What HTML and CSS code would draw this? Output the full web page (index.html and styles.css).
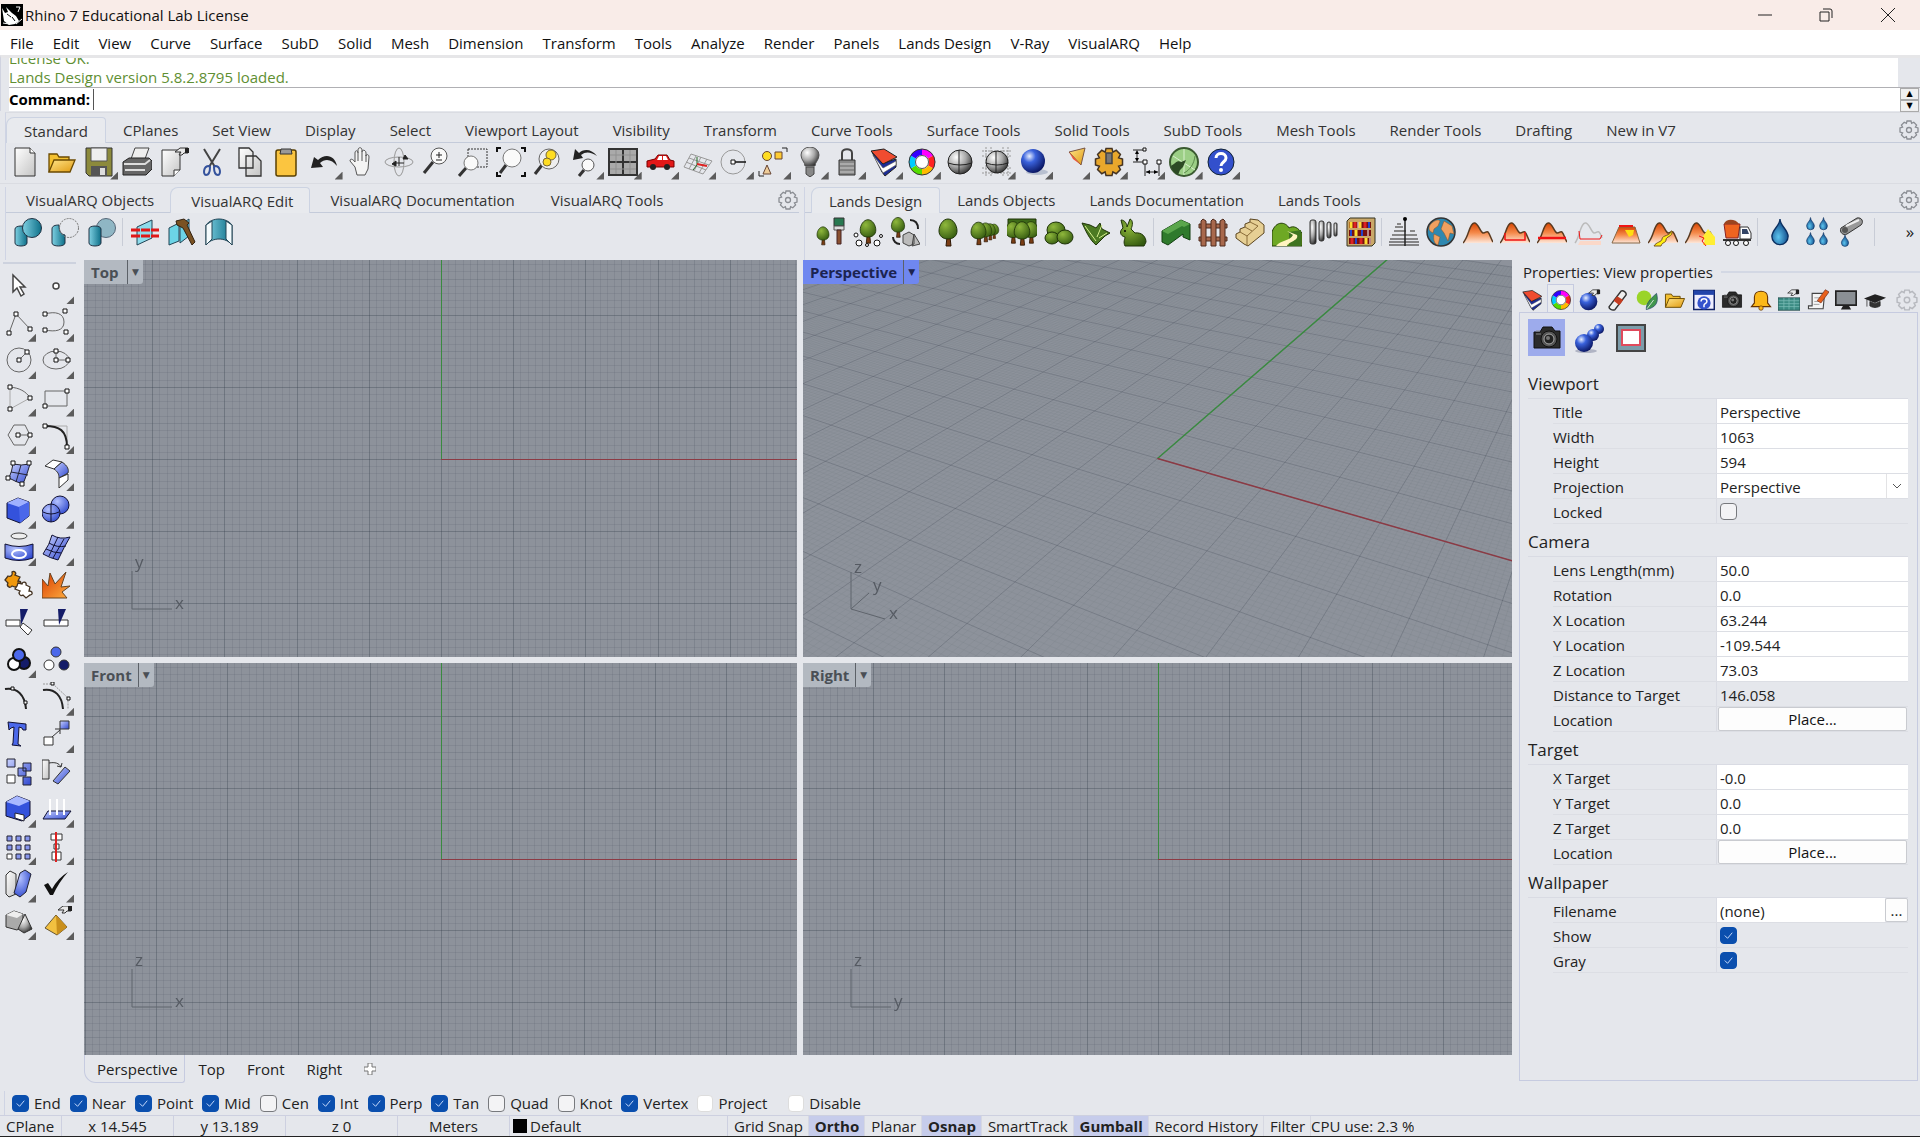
FILE: index.html
```html
<!DOCTYPE html>
<html lang="en">
<head>
<meta charset="utf-8">
<title>Rhino 7 Educational Lab License</title>
<link rel="stylesheet" href="styles.css">
</head>
<body>
<svg class="defs" aria-hidden="true">
  <defs>
    <linearGradient id="gBlue" x1="0" y1="0" x2="1" y2="1"><stop offset="0" stop-color="#c9d2ff"/><stop offset="1" stop-color="#3048d0"/></linearGradient>
    <linearGradient id="gTeal" x1="0" y1="0" x2="1" y2="0"><stop offset="0" stop-color="#7fd0e2"/><stop offset="1" stop-color="#0d6f88"/></linearGradient>
    <linearGradient id="gPaper" x1="0" y1="0" x2="1" y2="1"><stop offset="0" stop-color="#fff"/><stop offset="1" stop-color="#c4c4c4"/></linearGradient>
    <linearGradient id="gGold" x1="0" y1="0" x2="1" y2="1"><stop offset="0" stop-color="#ffe58a"/><stop offset="1" stop-color="#e09a10"/></linearGradient>
    <linearGradient id="gHill" x1="0" y1="0" x2="0" y2="1"><stop offset="0" stop-color="#d84400"/><stop offset=".5" stop-color="#f58b4c"/><stop offset="1" stop-color="#fde6d8"/></linearGradient>
    <linearGradient id="gFire" x1="0" y1="0" x2="1" y2="1"><stop offset="0" stop-color="#d83a00"/><stop offset="1" stop-color="#ffb040"/></linearGradient>
    <radialGradient id="gBall" cx=".35" cy=".3" r=".75"><stop offset="0" stop-color="#e8efff"/><stop offset=".35" stop-color="#3a62dc"/><stop offset="1" stop-color="#08125c"/></radialGradient>
    <radialGradient id="gSoft" cx=".35" cy=".3" r=".8"><stop offset="0" stop-color="#b4c2ff"/><stop offset="1" stop-color="#2b45cc"/></radialGradient>
    <radialGradient id="gGray" cx=".35" cy=".3" r=".8"><stop offset="0" stop-color="#fff"/><stop offset=".5" stop-color="#a8a8a8"/><stop offset="1" stop-color="#202020"/></radialGradient>
    <radialGradient id="gLeaf" cx=".35" cy=".3" r=".8"><stop offset="0" stop-color="#8fb83c"/><stop offset="1" stop-color="#33590f"/></radialGradient>
    <radialGradient id="gDrop" cx=".4" cy=".7" r=".7"><stop offset="0" stop-color="#5cc4ee"/><stop offset="1" stop-color="#063a7c"/></radialGradient>
  </defs>
  <symbol id="tree" viewBox="0 0 30 30"><path d="M14 20h3l1 9h-5z" fill="#7a3d14" stroke="#2c1604"/><path d="M15 2c5 0 9 6 9 12 0 5-4 8-9 8s-9-3-9-8c0-6 4-12 9-12z" fill="url(#gLeaf)" stroke="#1e3308"/></symbol>
  <symbol id="hill" viewBox="0 0 30 30"><path d="M1 26C6 20 6 7 11 6c4-1 6 9 9 10 3 0 3-2 5-1 2 2 3 7 5 11z" fill="url(#gHill)"/><path d="M0 26C6 20 6 7 11 6c4-1 6 9 9 10 3 0 3-2 5-1 2 2 3 7 5 10" fill="none" stroke="#5a3a20" stroke-width="1.500"/></symbol>
  <symbol id="gear" viewBox="0 0 20 20"><path d="M8 1h4l.6 2.400 2.200-1.200 2.800 2.800-1.200 2.200L19 8v4l-2.600.8 1.200 2.200-2.800 2.800-2.200-1.200L12 19H8l-.6-2.400-2.200 1.200L2.400 15l1.200-2.200L1 12V8l2.600-.8L2.400 5l2.800-2.800 2.200 1.200z" fill="none" stroke="currentColor" stroke-width="1.300"/><circle cx="10" cy="10" r="2.500" fill="none" stroke="currentColor" stroke-width="1.300"/></symbol>
  <symbol id="wheel" viewBox="0 0 30 30"><g fill="none" stroke-width="6"><path d="M15 5a10 10 0 0 1 8.700 5" stroke="#f0f"/><path d="M23.700 10a10 10 0 0 1 0 10" stroke="#f22"/><path d="M23.700 20a10 10 0 0 1-8.700 5" stroke="#fb0"/><path d="M15 25a10 10 0 0 1-8.700-5" stroke="#5d0"/><path d="M6.300 20a10 10 0 0 1 0-10" stroke="#0cf"/><path d="M6.300 10a10 10 0 0 1 8.700-5" stroke="#30f"/></g><circle cx="15" cy="15" r="6.500" fill="#fff" stroke="#555"/><circle cx="15" cy="15" r="13" fill="none" stroke="#333"/></symbol>
  <symbol id="wedge" viewBox="0 0 30 30"><path d="M2 5l10 20 3 4 11-9V12L14 16z" fill="#1c2c98" stroke="#222"/><path d="M3 8l10 13 13-7v4l-13 8z" fill="#fff" stroke="#555" stroke-width=".6"/><path d="M1 4l13-2 13 8-14 7z" fill="#f04c30" stroke="#222"/></symbol>
  <symbol id="folder" viewBox="0 0 30 30"><path d="M2 25V7h8l2 3h10v5" fill="#f3c030" stroke="#6b4a00" stroke-width="1.300"/><path d="M2 25l5-12h21l-5 12z" fill="url(#gGold)" stroke="#6b4a00" stroke-width="1.300"/></symbol>
  <symbol id="camera" viewBox="0 0 30 30"><path d="M2 9h6l3-5h9l3 4h5v17H2z" fill="#2b2b2b" stroke="#111"/><path d="M4 11h5M4 8h4" stroke="#888"/><circle cx="17" cy="16" r="8" fill="#555" stroke="#111"/><circle cx="17" cy="16" r="5" fill="#222" stroke="#aaa"/><circle cx="16" cy="15" r="2" fill="#777"/></symbol>
  <symbol id="hand" viewBox="0 0 14 9"><path d="M0 5l5-4h8v5H9L7 8H4l2-3z" fill="#e8e8e8" stroke="#333"/><path d="M10 1h4v5h-4z" fill="#222"/></symbol>
  <symbol id="drop" viewBox="0 0 14 20"><path d="M7 0c0 5 6 8 6 13a6 6 0 0 1-12 0C1 8 7 5 7 0z" fill="url(#gDrop)" stroke="#0a2f60"/></symbol>
</svg>

<header class="titlebar">
  <svg class="logo" viewBox="0 0 22 22"><path d="M0 0h22v22H0z"/><path d="M1 4l3 5 3-1-2-5 6 6 4 3 3 5-4 3-6 1-5-4z" fill="#fff"/><path d="M15 3h4l-2 5M2 19l6 1M15 20l6-5" stroke="#fff" fill="none"/><path d="M6 10l4 3M11 13l3 4" stroke="#000" fill="none"/></svg>
  <h1>Rhino 7 Educational Lab License</h1>
  <div class="window-buttons">
    <button aria-label="Minimize"><svg viewBox="0 0 16 16"><path d="M1 8h14" class="wl"/></svg></button>
    <button aria-label="Restore"><svg viewBox="0 0 16 16"><path d="M2 5h9v9H2zM5 2h7q2 0 2 2v7" class="wl"/></svg></button>
    <button aria-label="Close"><svg viewBox="0 0 16 16"><path d="M1 1l14 14M15 1L1 15" class="wl"/></svg></button>
  </div>
</header>

<nav class="menubar">
  <button>File</button><button>Edit</button><button>View</button><button>Curve</button><button>Surface</button><button>SubD</button><button>Solid</button><button>Mesh</button><button>Dimension</button><button>Transform</button><button>Tools</button><button>Analyze</button><button>Render</button><button>Panels</button><button>Lands Design</button><button>V-Ray</button><button>VisualARQ</button><button>Help</button>
</nav>

<section class="command">
  <div class="history"><p>License OK.</p><p>Lands Design version 5.8.2.8795 loaded.</p></div>
  <div class="prompt">
    <label for="cmd">Command:</label><input id="cmd" type="text">
    <div class="spin"><button aria-label="Up">▲</button><button aria-label="Down">▼</button></div>
  </div>
</section>

<section class="bar standard">
  <div class="tabs">
    <button class="on first">Standard</button><button>CPlanes</button><button>Set View</button><button>Display</button><button>Select</button><button>Viewport Layout</button><button>Visibility</button><button>Transform</button><button>Curve Tools</button><button>Surface Tools</button><button>Solid Tools</button><button>SubD Tools</button><button>Mesh Tools</button><button>Render Tools</button><button>Drafting</button><button>New in V7</button>
    <button class="opts" aria-label="Options"><svg><use href="#gear"/></svg></button>
  </div>
  <div class="tools wide">
    <button aria-label="New"><svg viewBox="0 0 30 30"><path d="M5 1h15l5 5v23H5z" fill="url(#gPaper)" stroke="#333"/><path d="M20 1v5h5" fill="#fff" stroke="#333"/></svg></button>
    <button aria-label="Open"><svg><use href="#folder"/></svg></button>
    <button class="f" aria-label="Save"><svg viewBox="0 0 30 30"><path d="M2 1h26v28H5l-3-3z" fill="#8c8a3c" stroke="#333"/><path d="M7 1h16v13H7z" fill="#eee" stroke="#555"/><path d="M7 19h16v10H7z" fill="#555"/><path d="M16 21h5v7h-5z" fill="#ddd"/></svg></button>
    <button aria-label="Print"><svg viewBox="0 0 30 30"><path d="M9 12l4-11h14l-4 11z" fill="#eee" stroke="#444"/><path d="M1 15l6-4h20l3 3v8l-6 6H1z" fill="#666" stroke="#222"/><path d="M2 17h21l5-4M3 23h20" stroke="#ddd" fill="none" stroke-width="2"/></svg></button>
    <button aria-label="Properties"><svg viewBox="0 0 30 30"><path d="M3 3h18v20l-6 6H3z" fill="url(#gPaper)" stroke="#333"/><path d="M21 23h-6v6" fill="#fff" stroke="#333"/><use href="#hand" x="16" y="0" width="14" height="9"/></svg></button>
    <button aria-label="Cut"><svg viewBox="0 0 30 30"><path d="M7 2l11 18M23 2L12 20" stroke="#444" stroke-width="2"/><path d="M12 19c-6 0-6 9-3 9s4-4 4-8zM18 19c6 0 6 9 3 9s-4-4-4-8z" fill="none" stroke="#34529c" stroke-width="2"/></svg></button>
    <button aria-label="Copy"><svg viewBox="0 0 30 30"><path d="M5 1h10l4 4v16H5zM12 9h10l5 5v15H12z" fill="url(#gPaper)" stroke="#333" stroke-width="1.300"/></svg></button>
    <button aria-label="Paste"><svg viewBox="0 0 30 30"><rect x="5" y="3" width="20" height="26" rx="2" fill="#fbc540" stroke="#5a4000" stroke-width="1.500"/><path d="M10 2h10l1 5H9z" fill="#999" stroke="#333"/></svg></button>
    <button class="f" aria-label="Undo"><svg viewBox="0 0 30 30"><path d="M28 19C26 8 16 6 9 13L5 10 2 21l12-1-3-4c5-5 12-4 17 3z" fill="#222"/></svg></button>
    <button aria-label="Pan"><svg viewBox="0 0 30 30"><path d="M11 28l-2-8-5-6c0-3 3-2 5 1V6c0-3 3-3 3 0V3c0-3 4-3 4 0v2c0-3 4-2 4 1v3c0-2 3-2 3 1l-1 12-3 6z" fill="#f4f4f4" stroke="#555"/><path d="M12 6v8M16 5v9M20 8v7" stroke="#555"/></svg></button>
    <button aria-label="Rotate view"><svg viewBox="0 0 30 30"><ellipse cx="15" cy="15" rx="14" ry="5" fill="none" stroke="#999"/><ellipse cx="15" cy="15" rx="5" ry="14" fill="none" stroke="#999"/><path d="M8 17l4-3v5zM19 12h5l-3-4zM15 10v9M11 16h9" fill="#222" stroke="#222"/></svg></button>
    <button aria-label="Zoom"><svg viewBox="0 0 30 30"><path d="M12 15L3 26" stroke="#333" stroke-width="3"/><circle cx="18" cy="9" r="8" fill="#fafafa" stroke="#555"/><path d="M15 8h6M18 5v6M15 13h6" stroke="#222"/></svg></button>
    <button aria-label="Zoom window"><svg viewBox="0 0 30 30"><path d="M10 2h19v18H10z" fill="none" stroke="#333" stroke-dasharray="2 1"/><path d="M8 21l-7 8" stroke="#333" stroke-width="3"/><circle cx="13" cy="16" r="7" fill="#fafafa" stroke="#777"/></svg></button>
    <button aria-label="Zoom extents"><svg viewBox="0 0 30 30"><path d="M1 5V1h4M25 1h4v4M29 25v4h-4M5 29H1v-4" fill="none" stroke="#111" stroke-width="2"/><path d="M10 18l-6 8" stroke="#333" stroke-width="3"/><circle cx="16" cy="11" r="9" fill="#fafafa" stroke="#777"/></svg></button>
    <button aria-label="Zoom selected"><svg viewBox="0 0 30 30"><path d="M9 18l-7 9" stroke="#333" stroke-width="3"/><circle cx="16" cy="12" r="10" fill="#eee" stroke="#666"/><circle cx="18" cy="8" r="5" fill="#fd2" stroke="#763"/><circle cx="14" cy="15" r="4" fill="#fd2" stroke="#763"/></svg></button>
    <button class="f" aria-label="Undo view"><svg viewBox="0 0 30 30"><path d="M26 9C20 1 12 2 8 6L4 2 2 13l10-2-2-3c5-4 10-3 16 1z" fill="#222"/><path d="M13 23l-5 6" stroke="#333" stroke-width="3"/><circle cx="17" cy="18" r="6" fill="#fafafa" stroke="#555"/></svg></button>
    <button class="f" aria-label="Four viewports"><svg viewBox="0 0 30 30"><path d="M1 2h28v26H1z" fill="#aaa" stroke="#333" stroke-width="2"/><path d="M15 2v26M1 15h28" stroke="#333" stroke-width="2"/><path d="M8 3v24M22 3v24M2 8h26M2 22h26" stroke="#909090"/></svg></button>
    <button class="f" aria-label="Right view"><svg viewBox="0 0 30 30"><path d="M2 20v-6l8-2 3-4h9l3 5 4 1v6z" fill="#e21818" stroke="#700"/><path d="M14 9h3v4h-5zM18 9h3l2 4h-5z" fill="#fff"/><circle cx="8" cy="20" r="3" fill="#222"/><circle cx="22" cy="20" r="3" fill="#222"/></svg></button>
    <button class="f" aria-label="CPlane"><svg viewBox="0 0 30 30"><path d="M8 7l21 7-9 13L1 20zM13 9L6 22M18 10l-7 14M24 12l-8 14M6 11l20 7M3 15l20 8" fill="none" stroke="#999"/><path d="M14 10v8l-4 5" fill="none" stroke="#262"/><path d="M14 17l10 2" stroke="#d22" stroke-width="2"/></svg></button>
    <button class="f" aria-label="Osnap"><svg viewBox="0 0 30 30"><circle cx="13" cy="15" r="12" fill="none" stroke="#999"/><path d="M13 15h13" stroke="#111" stroke-width="1.500"/><path class="h" d="M11 13h4v4h-4z"/></svg></button>
    <button class="f" aria-label="Select"><svg viewBox="0 0 30 30"><circle cx="9" cy="9" r="4.500" fill="#fd2" stroke="#643"/><path d="M17 5h7v7h-7z" fill="#fc3" stroke="#643"/><path d="M9 18l4 9H5z" fill="#ec9" stroke="#643"/><path d="M24 1h5v4M1 24v5h5" fill="none" stroke="#222"/></svg></button>
    <button class="f" aria-label="Hide"><svg viewBox="0 0 30 30"><path d="M10 19c0-4-4-6-4-11a9 8 0 0 1 18 0c0 5-4 7-4 11z" fill="url(#gGray)" stroke="#555"/><path d="M11 20h8v7l-4 3-4-3z" fill="#888" stroke="#444"/></svg></button>
    <button class="f" aria-label="Lock"><svg viewBox="0 0 30 30"><path d="M10 13V6c0-5 10-5 10 0v7" fill="none" stroke="#444" stroke-width="2"/><path d="M7 13h16v15H7z" fill="#888" stroke="#333"/><path d="M8 17h14M8 21h14M8 25h14" stroke="#ccc"/></svg></button>
    <button class="f" aria-label="Layers"><svg><use href="#wedge"/></svg></button>
    <button class="f" aria-label="Color"><svg><use href="#wheel"/></svg></button>
    <button aria-label="Shade"><svg viewBox="0 0 30 30"><circle cx="15" cy="15" r="12" fill="url(#gGray)" stroke="#222"/><path d="M3 16q12 4 24 0M14 3v24" fill="none" stroke="#222"/></svg></button>
    <button class="f" aria-label="Shade selected"><svg viewBox="0 0 30 30"><path d="M4 0v30M9 0v30M21 0v30M26 0v30M0 4h30M0 9h30M0 21h30M0 26h30" stroke="#999" stroke-dasharray="2 1"/><circle cx="15" cy="15" r="11" fill="url(#gGray)" stroke="#222"/><path d="M4 16q11 4 22 0M14 4v22" fill="none" stroke="#222"/></svg></button>
    <button class="f" aria-label="Render"><svg viewBox="0 0 30 30"><ellipse cx="18" cy="25" rx="11" ry="3" fill="#b8c0d0"/><circle cx="14" cy="14" r="12" fill="url(#gBall)"/></svg></button>
    <button class="f" aria-label="Spotlight"><svg viewBox="0 0 30 30"><path d="M12 5L28 1l-4 17z" fill="url(#gGold)" stroke="#754"/><path d="M12 5l12 13-8-6z" fill="#e53"/></svg></button>
    <button class="f" aria-label="Options"><svg viewBox="0 0 20 20"><path d="M8 1h4l.6 2.400 2.200-1.200 2.800 2.800-1.200 2.200L19 8v4l-2.600.8 1.200 2.200-2.800 2.800-2.200-1.200L12 19H8l-.6-2.400-2.200 1.200L2.400 15l1.200-2.200L1 12V8l2.600-.8L2.400 5l2.800-2.800 2.200 1.200z" fill="#e9a82c" stroke="#432"/><path d="M8 4h4v7H8z" fill="#777" stroke="#444"/></svg></button>
    <button class="f" aria-label="Dimension"><svg viewBox="0 0 30 30"><path d="M1 3h10M1 15h10M5 5v8M13 15v14M27 15v14M14 25h12" stroke="#222" fill="none"/><path d="M5 3l-2 4h4zM5 15l-2-4h4zM14 25l4-2v4zM26 25l-4-2v4z"/><path class="h" d="M11 1h3v3h-3zM11 13h4v4h-4zM25 13h4v4h-4z"/></svg></button>
    <button class="f" aria-label="Grasshopper"><svg viewBox="0 0 30 30"><circle cx="15" cy="15" r="14" fill="#9ccf86" stroke="#3a5a30" stroke-width="2"/><path d="M15 2v26M4 9l22 14" stroke="#d8f0cc"/><path d="M2 19c5-3 6-6 10-4l5-2-3 7-3 3-2 5c-4-2-6-5-7-9z" fill="#2c4a24"/><path d="M26 9c-1 8-5 14-11 17" fill="none" stroke="#5b8a4c"/></svg></button>
    <button class="f" aria-label="Help"><svg viewBox="0 0 30 30"><circle cx="15" cy="15" r="13" fill="#3350cc" stroke="#123"/><path d="M10 11c0-6 10-6 10 0 0 4-5 4-5 8" fill="none" stroke="#fff" stroke-width="3"/><circle cx="15" cy="23" r="2" fill="#fff"/></svg></button>
  </div>
</section>

<div class="bars">
  <section class="bar varq">
    <div class="tabs">
      <button>VisualARQ Objects</button><button class="on">VisualARQ Edit</button><button>VisualARQ Documentation</button><button>VisualARQ Tools</button>
      <button class="opts" aria-label="Options"><svg><use href="#gear"/></svg></button>
    </div>
    <div class="tools">
      <button aria-label="Union"><svg viewBox="0 0 30 30"><path d="M2 12c0-4 12-4 12 0v14c0 4-12 4-12 0z" fill="url(#gTeal)" stroke="#234"/><circle cx="19" cy="11" r="9.500" fill="url(#gTeal)" stroke="#234"/></svg></button>
      <button aria-label="Subtract"><svg viewBox="0 0 30 30"><path d="M2 12c0-3 3-4 7-4 0 7 2 9 6 10v8c0 4-13 4-13 0z" fill="url(#gTeal)" stroke="#234"/><circle cx="19" cy="11" r="9.500" fill="none" stroke="#777" stroke-dasharray="2 1"/></svg></button>
      <button aria-label="Intersect"><svg viewBox="0 0 30 30"><circle cx="19" cy="11" r="9.500" fill="#8fb6c4" stroke="#567"/><path d="M2 12c0-4 12-4 12 0v14c0 4-12 4-12 0z" fill="url(#gTeal)" stroke="#234"/></svg></button>
      <i class="sep"></i>
      <button aria-label="Split"><svg viewBox="0 0 30 30"><path d="M7 10l15-7v18L7 28z" fill="#8edcec" stroke="#245"/><path d="M1 13h28M1 19h28" stroke="#e01818" stroke-width="3" stroke-dasharray="9 1"/></svg></button>
      <button aria-label="Rebuild"><svg viewBox="0 0 30 30"><path d="M2 11l10-5v18L2 28zM13 8l9-6v17l-9 7z" fill="#6cd4e6" stroke="#245"/><path d="M9 4l8-2 5 4-2 2 8 17-3 3-9-17-6-3z" fill="#7a5222" stroke="#321"/></svg></button>
      <button aria-label="Wall"><svg viewBox="0 0 30 30"><path d="M2 8C8 0 22 0 28 8v20C22 20 8 20 2 28z" fill="url(#gTeal)" stroke="#245"/><path d="M2 8l6-4v18l-6 6zM28 8l-6-4v18l6 6z" fill="#f4fbfd" stroke="#245"/></svg></button>
    </div>
  </section>
  <section class="bar lands">
    <div class="tabs">
      <button class="on first">Lands Design</button><button>Lands Objects</button><button>Lands Documentation</button><button>Lands Tools</button>
      <button class="opts" aria-label="Options"><svg><use href="#gear"/></svg></button>
    </div>
    <div class="tools">
      <button aria-label="Plant style"><svg viewBox="0 0 30 30"><use href="#tree" x="-3" y="8" width="20" height="21"/><path d="M18 1h10v8H18z" fill="#287850" stroke="#333"/><path d="M18 9h10v4H18z" fill="#ddd" stroke="#555"/><path d="M21 13h4v14h-4z" fill="#8a5030" stroke="#422"/></svg></button>
      <button aria-label="Plants"><svg viewBox="0 0 30 30"><use href="#tree" x="2" width="26" height="28"/><g class="h"><circle cx="3" cy="18" r="2"/><circle cx="6" cy="26" r="3"/><circle cx="14" cy="28" r="1.500"/><circle cx="24" cy="26" r="3"/><circle cx="28" cy="19" r="1.500"/></g></svg></button>
      <button aria-label="Replace"><svg viewBox="0 0 30 30"><use href="#tree" x="-3" y="-1" width="22" height="22"/><path d="M20 3c6 0 8 4 8 9M3 20c0 4 3 7 7 7" fill="none" stroke="#222" stroke-width="2"/><path d="M13 18l6-3 5 3v9l-5 2-6-3zM24 17l6 10-8 2z" fill="#bbb" stroke="#444"/></svg></button>
      <i class="sep"></i>
      <button aria-label="Plant"><svg><use href="#tree"/></svg></button>
      <button aria-label="Row"><svg viewBox="0 0 30 30"><use href="#tree" x="16" y="5" width="16" height="18"/><use href="#tree" x="11" y="4" width="18" height="21"/><use href="#tree" x="5" y="3" width="21" height="24"/><use href="#tree" x="-4" y="3" width="25" height="26"/></svg></button>
      <button aria-label="Forest"><svg viewBox="0 0 30 30"><path d="M1 2h28v15H1z" fill="#3d6a18" stroke="#1e3308"/><use href="#tree" x="-6" y="1" width="24" height="28"/><use href="#tree" x="12" y="1" width="24" height="28"/><use href="#tree" x="2" y="2" width="26" height="28"/></svg></button>
      <button aria-label="Shrub"><svg viewBox="0 0 30 30"><g fill="url(#gLeaf)" stroke="#1e3308"><ellipse cx="12" cy="13" rx="9" ry="8"/><ellipse cx="8" cy="21" rx="7" ry="6"/><ellipse cx="21" cy="20" rx="8" ry="7"/></g></svg></button>
      <button aria-label="Ground cover"><svg viewBox="0 0 30 30"><path d="M1 6l8 2 6 3 4-5 2 6 8 4-5 3-9 9C8 22 5 14 1 6z" fill="#4c7a22" stroke="#1e3308"/><path d="M4 9l11 15M21 8l-5 12M26 16l-8 5" stroke="#d8f090" fill="none"/></svg></button>
      <button aria-label="Rabbit"><svg viewBox="0 0 30 30"><path d="M3 3c4 0 6 4 6 7l3-8c3 1 3 6 1 10l4 4c7-1 11 4 11 9l-2 4H7c-2-4 0-7 0-9-5-1-6-6-2-9z" fill="url(#gLeaf)" stroke="#1e3308"/><circle cx="7" cy="14" r="1"/></svg></button>
      <i class="sep"></i>
      <button aria-label="Hedge"><svg viewBox="0 0 30 30"><path d="M1 14L20 3l9 4v16l-7-3v-3L7 28l-6-3z" fill="#2f7a2c" stroke="#123f10"/><path d="M1 14L20 3l9 4-6 3-2-1L7 17z" fill="#5aa64c"/></svg></button>
      <button aria-label="Fence"><svg viewBox="0 0 30 30"><g fill="#a8684c" stroke="#4e2a1c"><path d="M1 7h28v4H1zM1 20h28v4H1z"/><path d="M3 4l2-2 3 2v25H3zM13 4l2-2 3 2v25h-5zM22 4l3-2 2 2v25h-5z"/></g></svg></button>
      <button aria-label="Stairs"><svg viewBox="0 0 30 30"><path d="M1 17l4-2v-3l5-2V7l5-2V2l8 1 6 5v8L13 29l-4-2-8-6z" fill="#e6cf94" stroke="#5b4520"/><path d="M5 15l7 4 11-10M10 10l7 4M15 5l8 4M12 19v9" fill="none" stroke="#8a6c38"/></svg></button>
      <button aria-label="Path"><svg viewBox="0 0 30 30"><path d="M0 15c4-12 14-10 17-4 5-3 9 0 13 5v13H0z" fill="#6ea824" stroke="#243f08"/><path d="M17 15l12-2v16H17z" fill="#3f7420"/><path d="M4 29c5-6 14-5 17-11l-6-4 10 4c2 6-8 6-10 11z" fill="#fff4c0"/></svg></button>
      <button aria-label="Bollards"><svg viewBox="0 0 30 30"><g fill="url(#gGray)" stroke="#333"><rect x="1" y="3" width="6" height="24" rx="2"/><rect x="10" y="4" width="5" height="20" rx="2"/><rect x="18" y="5" width="4" height="16" rx="2"/><rect x="25" y="6" width="3" height="13" rx="1"/></g></svg></button>
      <button aria-label="Library"><svg viewBox="0 0 30 30"><path d="M1 4l3-3h25v25l-3 3H1z" fill="#caa868" stroke="#332"/><path d="M3 5h22v6H3zM3 13h22v6H3zM3 21h22v6H3z" fill="#711"/><path d="M5 5v6M14 5v6M10 13v6M20 21v6" stroke="#fd3" stroke-width="3"/><path d="M9 5v6M19 5v6M6 21v6M15 21v6" stroke="#d22" stroke-width="3"/><path d="M23 5v6M5 13v6M16 13v6M10 21v6" stroke="#24c" stroke-width="2"/><path d="M22 13v6M12 5v6M24 21v6" stroke="#fff"/></svg></button>
      <i class="sep"></i>
      <button aria-label="Section"><svg viewBox="0 0 30 30"><path d="M8 7h4M6 10h8M5 14h12M21 14h5M3 18h25" stroke="#888" stroke-width="2"/><path d="M1 22h28M0 25h30M0 28h30" stroke="#666" stroke-width="1.500"/><path d="M16 1v28" stroke="#222" stroke-width="1.500"/><circle cx="16" cy="2" r="2"/></svg></button>
      <button aria-label="Earth"><svg viewBox="0 0 30 30"><circle cx="15" cy="15" r="14" fill="#2e88b0" stroke="#333" stroke-width="1.500"/><path d="M4 8c4-5 9-6 10-4l-2 5-4 3-1 4c-4-2-5-4-3-8zM8 17l6 3-2 8c-4-1-5-6-4-11zM18 4l8 5 2 8-4-1-2 8-4-8-3-4z" fill="#f0a060" stroke="#8a5020" stroke-width=".5"/></svg></button>
      <button aria-label="Terrain"><svg><use href="#hill"/></svg></button>
      <button aria-label="Terrain volume"><svg viewBox="0 0 30 30"><use href="#hill"/><path d="M5 23h20V15M5 23v-7" fill="none" stroke="#f01414" stroke-width="1.500"/></svg></button>
      <button aria-label="Terrain level"><svg viewBox="0 0 30 30"><use href="#hill"/><path d="M1 21h28" stroke="#f01414" stroke-width="2.500"/></svg></button>
      <button aria-label="Terrain hole"><svg viewBox="0 0 30 30"><path d="M1 26C6 20 6 7 11 6c4-1 6 9 9 10 3 0 3-2 5-1 2 2 2 4 3 6" fill="none" stroke="#bbb" stroke-width="1.500"/><path d="M5 14l1 8h20l2-4" fill="none" stroke="#f01414"/><path d="M6 24h21v4H4z" fill="#fbd8c8"/></svg></button>
      <button aria-label="Terrain cut"><svg viewBox="0 0 30 30"><path d="M1 26L8 10h16l5 16z" fill="url(#gHill)" stroke="#864"/><path d="M8 9h14" stroke="#f01414" stroke-width="2"/><path d="M14 13h9l-1 5-4 2z" fill="#fd1"/></svg></button>
      <button aria-label="Terrain path"><svg viewBox="0 0 30 30"><use href="#hill"/><path d="M23 14c0 5-9 4-9 8 0 3-6 3-8 7h7c1-4 5-3 5-6 0-4 7-3 6-9z" fill="#fe1" stroke="#752"/></svg></button>
      <button aria-label="Terrain split"><svg viewBox="0 0 30 30"><use href="#hill"/><path d="M23 12l7 8v8H18l2-5-3-2z" fill="#fe3"/><path d="M14 19l5 2-2 3 4 5" fill="none" stroke="#f01414"/></svg></button>
      <button aria-label="Earthwork"><svg viewBox="0 0 30 30"><path d="M2 7h16l-2 14H4z" fill="#ee6420" stroke="#822"/><path d="M2 7c2-6 12-5 15 0z" fill="#9a4420"/><path d="M18 22V10h8l3 6v6z" fill="#fff" stroke="#333"/><path d="M20 12h5l2 5h-7z" fill="#346"/><path d="M1 23h28" stroke="#333" stroke-width="2"/><g class="h"><circle cx="6" cy="26" r="2.500"/><circle cx="14" cy="26" r="2.500"/><circle cx="24" cy="26" r="2.500"/></g></svg></button>
      <i class="sep"></i>
      <button aria-label="Water"><svg viewBox="0 0 30 30"><use href="#drop" x="5" y="2" width="20" height="27"/></svg></button>
      <button aria-label="Sprinklers"><svg viewBox="0 0 30 30"><use href="#drop" x="4" width="9" height="14"/><use href="#drop" x="17" width="9" height="14"/><use href="#drop" x="4" y="15" width="9" height="14"/><use href="#drop" x="17" y="15" width="9" height="14"/></svg></button>
      <button aria-label="Pipe"><svg viewBox="0 0 30 30"><path d="M2 11L18 1c5-1 7 4 4 7L8 17c-4 2-8-2-6-6z" fill="#999" stroke="#333"/><path d="M7 9L20 3" stroke="#eee" stroke-width="2"/><circle cx="6" cy="13" r="3" fill="#555"/><use href="#drop" x="1" y="18" width="10" height="12"/></svg></button>
      <i class="sep"></i>
      <button class="more" aria-label="More">»</button>
    </div>
  </section>
</div>

<main class="work">
  <aside class="palette">
    <button aria-label="Pointer"><svg viewBox="0 0 30 30"><path d="M9 4v17l4-4 4 8 3-2-4-7h5z" fill="#fff" stroke="#444" stroke-width="1.500"/></svg></button>
    <button class="f" aria-label="Point"><svg viewBox="0 0 30 30"><circle cx="14" cy="15" r="3" fill="#fff" stroke="#444" stroke-width="1.500"/></svg></button>
    <button class="f" aria-label="Polyline"><svg viewBox="0 0 30 30"><path class="l" d="M5 25L12 6l14 15"/><path class="h" d="M3 23h4v4H3zM10 4h4v4h-4zM24 19h4v4h-4z"/></svg></button>
    <button class="f" aria-label="Curve"><svg viewBox="0 0 30 30"><path class="l" d="M3 6c10-3 19-1 19 8s-9 10-19 8"/><path class="h" d="M1 4h4v4H1zM1 20h4v4H1zM21 1h4v4h-4zM22 22h4v4h-4z"/></svg></button>
    <button class="f" aria-label="Circle"><svg viewBox="0 0 30 30"><circle class="l" cx="15" cy="15" r="12"/><path class="l" d="M15 15l8-8"/><path class="h" d="M13 13h4v4h-4zM21 5h4v4h-4z"/></svg></button>
    <button class="f" aria-label="Ellipse"><svg viewBox="0 0 30 30"><ellipse class="l" cx="14" cy="15" rx="13" ry="9"/><path class="l" d="M14 6v9h12"/><path class="h" d="M12 13h4v4h-4zM12 4h4v4h-4zM24 13h4v4h-4z"/></svg></button>
    <button class="f" aria-label="Arc"><svg viewBox="0 0 30 30"><path d="M6 4v22l20-11" fill="none" stroke="#aaa"/><path class="l" d="M6 4c9 1 16 4 20 11"/><path class="h" d="M4 2h4v4H4zM4 24h4v4H4zM24 13h4v4h-4z"/></svg></button>
    <button class="f" aria-label="Rectangle"><svg viewBox="0 0 30 30"><path class="l" d="M3 8h22v15H3z"/><path class="h" d="M23 6h4v4h-4zM1 21h4v4H1z"/></svg></button>
    <button class="f" aria-label="Polygon"><svg viewBox="0 0 30 30"><path class="l" d="M10 5h11l5 10-5 10H10L4 15zM14 15h12"/><path class="h" d="M12 13h4v4h-4zM24 13h4v4h-4z"/></svg></button>
    <button class="f" aria-label="Fillet"><svg viewBox="0 0 30 30"><path d="M3 6h22v20" fill="none" stroke="#aaa"/><path d="M3 6c14 0 22 4 22 21" fill="none" stroke="#222" stroke-width="2"/><path class="h" d="M1 4h4v4H1zM23 25h4v4h-4z"/></svg></button>
    <button class="f" aria-label="Surface"><svg viewBox="0 0 30 30"><path d="M9 6q8 2 17 0-2 8-7 20Q12 24 5 20 8 13 9 6z" fill="url(#gBlue)" stroke="#223"/><path d="M17 7l-5 17M7 14l17 3" stroke="#223"/><path class="h" d="M7 3h4v4H7zM23 3h4v4h-4zM2 18h4v4H2zM16 24h4v4h-4z"/></svg></button>
    <button class="f" aria-label="Blend"><svg viewBox="0 0 30 30"><path d="M3 8l8-6 9 2-8 7z" fill="#fff" stroke="#333"/><path d="M12 11l8-7c6 4 7 8 6 11l-9 5c0-4-1-6-5-9z" fill="url(#gBlue)" stroke="#333"/><path d="M17 20l9-4v6l-9 8z" fill="#fff" stroke="#333"/></svg></button>
    <button class="f" aria-label="Box"><svg viewBox="0 0 30 30"><path d="M3 8l11-5 11 4v14l-9 7L3 23z" fill="#3452dc" stroke="#113"/><path d="M3 8l11-5 11 4-10 5z" fill="#9fb0ff"/><path d="M15 12l10-5v14l-9 7z" fill="#4b68ea"/></svg></button>
    <button class="f" aria-label="Sphere"><svg viewBox="0 0 30 30"><circle cx="18" cy="10" r="9" fill="url(#gSoft)" stroke="#113"/><circle cx="9" cy="18" r="9" fill="url(#gSoft)" stroke="#113"/><path d="M1 17q8 4 16 0M9 9v18" fill="none" stroke="#113"/></svg></button>
    <button class="f" aria-label="Project"><svg viewBox="0 0 30 30"><ellipse cx="15" cy="4" rx="8" ry="3" fill="#eee" stroke="#444"/><path d="M1 12q14 5 28 0v14q-14 5-28 0z" fill="url(#gSoft)" stroke="#113"/><ellipse cx="15" cy="22" rx="7" ry="4" fill="none" stroke="#fff" stroke-width="2"/></svg></button>
    <button class="f" aria-label="Mesh"><svg viewBox="0 0 30 30"><path d="M10 3q8 5 18 2-6 10-12 23Q8 26 1 22 8 12 10 3z" fill="url(#gBlue)" stroke="#113"/><path d="M16 5L7 24M22 7L11 26M7 11q8 5 17 3M4 17q8 4 15 4" fill="none" stroke="#113"/></svg></button>
    <button aria-label="Join"><svg viewBox="0 0 30 30"><path d="M8 2c2-2 5 1 3 3l5 2-2 4c4 0 4 5 0 5l-3 1-3-1c-2 3-6 0-4-3l-3-3 3-4c3 1 5-1 4-4z" fill="#f0980c" stroke="#432" stroke-width="1.300"/><path d="M14 13l4 1c1-3 5-2 4 1l4 2-1 4c4 0 4 4 1 4l-4 3-3-3c-3 2-5-2-3-4l-5-2 2-3z" fill="#fff" stroke="#432" stroke-width="1.300"/></svg></button>
    <button aria-label="Explode"><svg viewBox="0 0 30 30"><path d="M0 28V9l6 7 2-13 5 11L24 2l-5 15 9-1-8 6 5 6z" fill="url(#gFire)" stroke="#642"/></svg></button>
    <button aria-label="Trim"><svg viewBox="0 0 30 30"><path class="hp" d="M2 13h14v6H2zM19 16l9 7-4 5-8-8z"/><path d="M16 2h8l-7 16z" fill="#141c68"/></svg></button>
    <button aria-label="Split"><svg viewBox="0 0 30 30"><path class="hp" d="M2 13h24v6H2z"/><path d="M16 2h8l-7 16z" fill="#141c68"/></svg></button>
    <button class="f" aria-label="Group"><svg viewBox="0 0 30 30"><circle cx="20" cy="18" r="6" fill="#141c68" stroke="#111" stroke-width="2"/><circle cx="10" cy="19" r="6" fill="#fff" stroke="#111" stroke-width="2"/><circle cx="15" cy="10" r="6" fill="#4b68ea" stroke="#111" stroke-width="2"/></svg></button>
    <button aria-label="Ungroup"><svg viewBox="0 0 30 30"><circle cx="14" cy="7" r="5" fill="#4b68ea" stroke="#333"/><circle cx="7" cy="20" r="5" fill="#fff" stroke="#333"/><circle cx="22" cy="20" r="5" fill="#141c68" stroke="#333"/></svg></button>
    <button aria-label="Edit points"><svg viewBox="0 0 30 30"><path d="M1 7c12-2 20 6 21 20" fill="none" stroke="#222" stroke-width="2"/><path class="h" d="M7 5h3v3H7zM20 19h3v3h-3z"/></svg></button>
    <button class="f" aria-label="Control points"><svg viewBox="0 0 30 30"><path d="M1 8c12-2 19 6 20 19" fill="none" stroke="#222" stroke-width="2"/><path d="M1 2h10l15 14v11" fill="none" stroke="#999" stroke-dasharray="2 1"/><path class="h" d="M9 0h3v3H9zM25 15h3v3h-3z"/></svg></button>
    <button aria-label="Text"><svg viewBox="0 0 30 30"><path d="M4 3l18 2v6h-3l-1-2-3-1-1 17 3 2-9-1 1-2 1-16-3 1-2 2z" fill="#4b68ea" stroke="#113"/></svg></button>
    <button class="f" aria-label="Move"><svg viewBox="0 0 30 30"><path d="M18 2h9v8h-9z" fill="url(#gBlue)" stroke="#333"/><path class="hp" d="M2 18h9v8H2z"/><path d="M10 18l8-7m-5-1h5v5" fill="none" stroke="#333"/></svg></button>
    <button aria-label="Copy objects"><svg viewBox="0 0 30 30"><path d="M3 2h8v8H3zM19 6h8v8h-8zM14 11h8v8h-8zM19 20h8v8h-8z" fill="url(#gBlue)" stroke="#223"/><path class="hp" d="M3 18h8v8H3z"/></svg></button>
    <button aria-label="Rotate"><svg viewBox="0 0 30 30"><path d="M0 3h7v19H0z" fill="url(#gPaper)" stroke="#333"/><path d="M11 24L23 10l5 4-12 13z" fill="url(#gBlue)" stroke="#333"/><path d="M7 6c6-1 10 0 12 4m-4-1l4 1 1-4" fill="none" stroke="#333"/></svg></button>
    <button class="f" aria-label="Boolean"><svg viewBox="0 0 30 30"><path d="M2 8l11-6 13 5v14l-8 6L2 22z" fill="#3452dc" stroke="#113"/><path d="M2 8l11-6 13 5-11 5z" fill="#a8b8ff"/><path d="M11 19l9 2v6l-9-3z" fill="#fff" stroke="#223"/></svg></button>
    <button class="f" aria-label="Extrude"><svg viewBox="0 0 30 30"><path d="M6 17h23l-6 8H1z" fill="url(#gBlue)" stroke="#113"/><path d="M8 21V5M15 21V5M22 21V5" stroke="#fff" stroke-width="2"/></svg></button>
    <button class="f" aria-label="Array"><svg viewBox="0 0 30 30"><path d="M3 4h5v5H3zM12 4h5v5h-5zM21 4h5v5h-5zM3 13h5v5H3zM12 13h5v5h-5zM21 13h5v5h-5zM12 22h5v5h-5zM21 22h5v5h-5z" fill="#8796ec" stroke="#223"/><path class="hp" d="M3 22h5v5H3z"/></svg></button>
    <button class="f" aria-label="Align"><svg viewBox="0 0 30 30"><path class="hp" d="M9 2h11v6H9zM12 12h5v5h-5zM10 20h9v8h-9z"/><path d="M14 0v30" stroke="#d22" stroke-width="2"/></svg></button>
    <button class="f" aria-label="Bend"><svg viewBox="0 0 30 30"><path d="M2 6l4-4 6 3v20l-7 3-3-3z" fill="url(#gPaper)" stroke="#333"/><path d="M16 4l5-3 6 4-5 18-6 5-6-4z" fill="url(#gSoft)" stroke="#223"/></svg></button>
    <button class="f" aria-label="Check"><svg viewBox="0 0 30 30"><path d="M2 16l4-2 4 6Q16 9 26 3q-9 10-15 23H8z" fill="#111"/></svg></button>
    <button class="f" aria-label="Solids"><svg viewBox="0 0 30 30"><path d="M2 9l8-4 9 3v12l-6 4-11-3z" fill="#aaa" stroke="#333"/><path d="M2 9l8-4 9 3-6 4z" fill="#eee"/><path d="M21 8l7 15-8 4-6-4z" fill="url(#gGray)" stroke="#333"/></svg></button>
    <button class="f" aria-label="Pyramid"><svg viewBox="0 0 30 30"><path d="M14 9l11 12-10 8L3 22z" fill="#f2c040" stroke="#653"/><path d="M14 9l1 20 10-8z" fill="#c98f1c"/><use href="#hand" x="16" y="-1" width="14" height="9"/></svg></button>
  </aside>

  <div class="stage">
    <div class="viewports">
      <section class="vp" data-view="plan"><canvas></canvas><div class="vt"><span>Top</span><button aria-label="Top menu">▼</button></div>
        <svg class="axes" viewBox="0 0 70 70"><path d="M7 19v38h40"/><text x="10" y="16">y</text><text x="50" y="57">x</text></svg></section>
      <section class="vp" data-view="persp"><canvas></canvas><div class="vt active"><span>Perspective</span><button aria-label="Perspective menu">▼</button></div>
        <svg class="axes" viewBox="0 0 70 70"><path d="M7 20v37l18-16M7 57l34 10"/><text x="10" y="21">z</text><text x="29" y="39">y</text><text x="45" y="67">x</text></svg></section>
      <section class="vp" data-view="plan"><canvas></canvas><div class="vt"><span>Front</span><button aria-label="Front menu">▼</button></div>
        <svg class="axes" viewBox="0 0 70 70"><path d="M7 19v38h40"/><text x="10" y="16">z</text><text x="50" y="57">x</text></svg></section>
      <section class="vp" data-view="plan"><canvas></canvas><div class="vt"><span>Right</span><button aria-label="Right menu">▼</button></div>
        <svg class="axes" viewBox="0 0 70 70"><path d="M7 19v38h40"/><text x="10" y="16">z</text><text x="50" y="57">y</text></svg></section>
    </div>
    <div class="vtabs"><button class="on">Perspective</button><button>Top</button><button>Front</button><button>Right</button><button aria-label="Add"><svg viewBox="0 0 12 12"><path d="M4 0h4v4h4v4H8v4H4V8H0V4h4z" fill="#fff" stroke="#777"/></svg></button></div>
  </div>

  <aside class="panel">
    <h2><span>Properties: View properties</span></h2>
    <div class="ptabs">
      <button aria-label="Layers"><svg><use href="#wedge"/></svg></button>
      <button class="on" aria-label="Properties"><svg><use href="#wheel"/></svg></button>
      <button aria-label="Rendering"><svg viewBox="0 0 30 30"><circle cx="13" cy="17" r="12" fill="url(#gBall)"/><use href="#hand" x="12" y="0" width="18" height="10"/></svg></button>
      <button aria-label="Materials"><svg viewBox="0 0 30 30"><path d="M3 24L19 3c3-2 8 2 7 5L11 28c-4 2-9-1-8-4z" fill="#eee" stroke="#333" stroke-width="2"/><path d="M9 16l5-6 8 5-5 7z" fill="#c63c20"/></svg></button>
      <button aria-label="Environments"><svg viewBox="0 0 30 30"><circle cx="11" cy="12" r="10" fill="#9ad428"/><path d="M14 28c0-9 5-14 14-22 3 12 0 19-14 22z" fill="#40964c" stroke="#246"/><path d="M15 27l9-12" stroke="#fff"/></svg></button>
      <button aria-label="Libraries"><svg><use href="#folder"/></svg></button>
      <button aria-label="Help"><svg viewBox="0 0 30 30"><path d="M1 2h28v26H1z" fill="#eef" stroke="#126" stroke-width="2"/><path d="M1 2h28v6H1z" fill="#24a"/><circle cx="15" cy="19" r="9" fill="#3452cc"/><path d="M11 17c0-5 8-5 8 0 0 3-4 3-4 5v3" fill="none" stroke="#fff" stroke-width="2"/></svg></button>
      <button aria-label="Views"><svg><use href="#camera"/></svg></button>
      <button aria-label="Notifications"><svg viewBox="0 0 30 30"><path d="M2 24l4-5v-8c0-5 4-8 9-8s9 3 9 8v8l4 5z" fill="#fcb818" stroke="#630" stroke-width="1.500"/><circle cx="15" cy="26" r="3" fill="#fcb818" stroke="#630"/></svg></button>
      <button aria-label="Ground plane"><svg viewBox="0 0 30 30"><path d="M0 12h30v17H0z" fill="#3c8c84" stroke="#244"/><path d="M1 16h28M1 20h28M1 24h28M8 12v16M15 12v16M22 12v16" stroke="#7dbdb8"/><use href="#hand" x="12" y="0" width="18" height="10"/></svg></button>
      <button aria-label="Notes"><svg viewBox="0 0 30 30"><path d="M7 6h17l-2 21H2v-4h5z" fill="#f4f4f4" stroke="#444" stroke-width="1.500"/><path d="M10 12h9M10 17h8M9 21h8" stroke="#888"/><path d="M14 16L25 1l5 3-11 15z" fill="#e8601c" stroke="#732"/></svg></button>
      <button aria-label="Display"><svg viewBox="0 0 30 30"><path d="M1 3h28v19H1z" fill="#8a8f94" stroke="#222" stroke-width="2.500"/><path d="M8 28h14l-3-5h-8z" fill="#222"/></svg></button>
      <button aria-label="Learn"><svg viewBox="0 0 30 30"><path d="M0 13l15-6 15 5-15 7z" fill="#222"/><path d="M8 17v6c4 3 10 3 14 0v-6l-7 3zM4 14v10" fill="#333" stroke="#222"/></svg></button>
      <button class="opts" aria-label="Panel options"><svg><use href="#gear"/></svg></button>
    </div>
    <div class="pbody">
      <div class="ptypes">
        <button class="on" aria-label="Viewport"><svg><use href="#camera"/></svg></button>
        <button aria-label="Materials"><svg viewBox="0 0 30 30"><ellipse cx="12" cy="28" rx="11" ry="2" fill="#b0b4c4"/><circle cx="25" cy="6" r="5" fill="url(#gBall)"/><circle cx="19" cy="12" r="6" fill="url(#gBall)"/><circle cx="10" cy="20" r="9" fill="url(#gBall)"/></svg></button>
        <button aria-label="Frame"><svg viewBox="0 0 30 30"><path d="M1 2h28v26H1z" fill="#7c9caa" stroke="#444" stroke-width="2"/><path d="M6 7h18v15H6z" fill="#fff" stroke="#e04a5c" stroke-width="2"/></svg></button>
      </div>
      <h3>Viewport</h3>
      <div class="row"><label for="a1">Title</label><input id="a1" value="Perspective"></div>
      <div class="row"><label for="a2">Width</label><input id="a2" value="1063"></div>
      <div class="row"><label for="a3">Height</label><input id="a3" value="594"></div>
      <div class="row"><label for="a4">Projection</label><select id="a4"><option>Perspective</option><option>Parallel</option></select></div>
      <div class="row"><label for="a5">Locked</label><div class="cell"><input type="checkbox" id="a5"></div></div>
      <h3>Camera</h3>
      <div class="row"><label for="b1">Lens Length(mm)</label><input id="b1" value="50.0"></div>
      <div class="row"><label for="b2">Rotation</label><input id="b2" value="0.0"></div>
      <div class="row"><label for="b3">X Location</label><input id="b3" value="63.244"></div>
      <div class="row"><label for="b4">Y Location</label><input id="b4" value="-109.544"></div>
      <div class="row"><label for="b5">Z Location</label><input id="b5" value="73.03"></div>
      <div class="row"><label for="b6">Distance to Target</label><input id="b6" class="ro" value="146.058" readonly></div>
      <div class="row"><label for="b7">Location</label><div class="cell"><button class="place" id="b7">Place...</button></div></div>
      <h3>Target</h3>
      <div class="row"><label for="c1">X Target</label><input id="c1" value="-0.0"></div>
      <div class="row"><label for="c2">Y Target</label><input id="c2" value="0.0"></div>
      <div class="row"><label for="c3">Z Target</label><input id="c3" value="0.0"></div>
      <div class="row"><label for="c4">Location</label><div class="cell"><button class="place" id="c4">Place...</button></div></div>
      <h3>Wallpaper</h3>
      <div class="row"><label for="d1">Filename</label><input id="d1" value="(none)"><button class="dots" aria-label="Browse">...</button></div>
      <div class="row"><label for="d2">Show</label><div class="cell"><input type="checkbox" id="d2" checked></div></div>
      <div class="row"><label for="d3">Gray</label><div class="cell"><input type="checkbox" id="d3" checked></div></div>
    </div>
  </aside>
</main>

<section class="osnap">
  <label><input type="checkbox" checked>End</label><label><input type="checkbox" checked>Near</label><label><input type="checkbox" checked>Point</label><label><input type="checkbox" checked>Mid</label><label><input type="checkbox">Cen</label><label><input type="checkbox" checked>Int</label><label><input type="checkbox" checked>Perp</label><label><input type="checkbox" checked>Tan</label><label><input type="checkbox">Quad</label><label><input type="checkbox">Knot</label><label><input type="checkbox" checked>Vertex</label><label class="pale"><input type="checkbox">Project</label><label class="pale"><input type="checkbox">Disable</label>
</section>
<footer class="status">
  <span class="cp">CPlane</span><span class="num">x 14.545</span><span class="num">y 13.189</span><span class="num">z 0</span><span class="num">Meters</span><span class="layer"><i></i>Default</span>
  <button>Grid Snap</button><button class="on">Ortho</button><button>Planar</button><button class="on">Osnap</button><button>SmartTrack</button><button class="on">Gumball</button><button>Record History</button><button class="filter">Filter</button><span class="cpu">CPU use: 2.3 %</span>
</footer>
<script src="grid.js"></script>
</body>
</html>
```

FILE: styles.css
```css
* { box-sizing: border-box; }
html, body { margin: 0; }
body {
  min-height: 100vh;
  display: flex;
  flex-direction: column;
  background: #e5e7ec;
  color: #222;
  font: 15px/20px "Open Sans", "Noto Sans", sans-serif;
  overflow: hidden;
}
button, input, select { font: inherit; color: inherit; margin: 0; }
button { border: 0; padding: 0; background: none; white-space: nowrap; }
h1, h2, h3, p { margin: 0; font-weight: 400; }
.defs { position: absolute; width: 0; height: 0; }
.l { fill: none; stroke: #666; }
.h { fill: #fff; stroke: #111; }
.hp { fill: #fff; stroke: #333; }

.titlebar { display: flex; align-items: center; height: 30px; background: #f9ece8; color: #111; }
.logo { width: 22px; height: 22px; margin: 0 2px 0 1px; }
.titlebar h1 { font-size: 15px; line-height: 20px; }
.window-buttons { display: flex; margin-left: auto; }
.window-buttons button { width: 61px; height: 28px; }
.window-buttons button:last-child { width: 64px; }
.window-buttons svg { width: 16px; height: 16px; display: block; margin: auto; }
.wl { fill: none; stroke: #222; stroke-width: 1; }

.menubar { display: flex; align-items: center; gap: 19px; height: 25px; padding-left: 10px; background: #fff; color: #111; }

.command { border-top: 3px solid #e6e6e8; padding-left: 8px; border-left: 1px solid #d0d3e0; }
.history { height: 29px; margin-right: 22px; background: #fff; color: #5f8f33; overflow: hidden; display: flex; flex-direction: column; justify-content: flex-end; }
.history p { line-height: 19px; flex: none; }
.prompt { display: flex; height: 24px; background: #fff; border-top: 1px solid #b0b0b4; }
.prompt label { font-weight: 700; color: #000; line-height: 22px; }
.prompt input { flex: 1; border: 0; border-left: 1px solid #555; outline: 0; margin: 1px 0 1px 3px; padding: 0; }
.spin { display: grid; width: 20px; background: #e5e7ec; padding-right: 1px; }
.spin button { font: 8px/10px "DejaVu Sans", sans-serif; border: 1px solid #aaa; background: #f0f0f0; color: #000; height: 12px; }

.bar { display: flex; flex-direction: column; border-left: 1px solid #cfd4e4; margin-left: 5px; }
.tabs { display: flex; height: 26px; border-bottom: 1px solid #c4cbda; }
.tabs button { padding: 0 17px; line-height: 26px; height: 26px; color: #333; }
.tabs .on { border: 1px solid #ccd3e2; border-bottom: 0; background: #e8eaee; border-radius: 8px 4px 0 0; }
.tabs .opts, .ptabs .opts { margin-left: auto; padding: 0; width: 22px; color: #8a8d93; }
.opts svg { width: 20px; height: 20px; display: block; margin: auto; }
.standard { border-top: 1px solid #dadce2; padding-top: 4px; margin-top: 1px; }
.tools { display: flex; height: 37px; align-items: center; }
.tools button { width: 37px; height: 36px; flex: none; position: relative; }
.tools svg { width: 30px; height: 30px; display: block; margin: auto; }
.wide { display: grid; grid-template-columns: repeat(33, 1fr); width: min(100%, 1234px); }
.wide button { width: auto; }
.f { position: relative; }
.f::after { content: ""; position: absolute; right: 0; bottom: 0; width: 8px; height: 8px; background: #5c5c5c; clip-path: polygon(100% 0, 100% 100%, 0 100%); }
.sep { width: 1px; height: 28px; margin: 0 3px 0 2px; background: #c8ccd6; flex: none; }
.bars { display: grid; grid-template-columns: 799fr 1121fr; border-top: 1px solid #dadce2; margin-top: 3px; padding-top: 3px; height: 77px; }
.varq .tabs button:not(.opts) { padding: 0 16px 0 20px; }
.varq .tools { padding-left: 3px; }
.lands .tabs { padding-left: 6px; }
.lands .tools { padding-left: 7px; }
.tools .more { width: 20px; margin-left: auto; font-size: 17px; line-height: 30px; }

.work { flex: 1; display: flex; min-height: 0; }
.palette { width: 76px; margin-right: 8px; display: grid; grid-template-columns: 1fr 1fr; grid-auto-rows: 1fr; height: 680px; padding-top: 7px; background: linear-gradient(#cdd2de, #cdd2de) 3px 2px / 73px 2px no-repeat; }
.palette button { display: grid; place-items: center; }
.palette svg { width: 30px; height: 30px; }
.palette .f::after { right: 2px; bottom: 0; }

.stage { flex: 1; display: flex; flex-direction: column; min-width: 0; }
.viewports { flex: 1; display: grid; grid-template-columns: 713fr 709fr; grid-template-rows: 396fr 392fr; gap: 6px; min-height: 0; }
.vp { position: relative; background: #8d929b; overflow: hidden; min-height: 0; }
.vp canvas { position: absolute; left: 0; top: 0; width: 100%; height: 100%; }
.vt { position: absolute; left: 0; top: 0; display: flex; height: 24px; background: #b3b9c1; color: #4a4f55; font-weight: 700; line-height: 24px; border-radius: 0 0 3px 0; }
.vt span { min-width: 43px; padding: 0 6px 0 7px; }
.vt button { width: 16px; border-left: 1px solid #5c6168; font: 9px/20px "DejaVu Sans", sans-serif; }
.vt.active { background: #6f87f0; color: #1c2350; }
.axes { position: absolute; left: 41px; bottom: 35px; width: 70px; height: 70px; }
.axes path { fill: none; stroke: #5f646c; }
.axes text { font-size: 17px; fill: #555a62; }
.vtabs { display: flex; height: 28px; margin-bottom: 8px; }
.vtabs button { padding: 0 11px; }
.vtabs .on { border: 1px solid #c6cbe0; border-top: 0; border-radius: 0 0 3px 12px; padding: 0 6px 0 12px; margin-right: 3px; }
.vtabs svg { width: 12px; height: 12px; display: block; }

.panel { width: 401px; margin-left: 7px; display: flex; flex-direction: column; }
.panel h2 { display: flex; align-items: center; gap: 8px; height: 24px; padding-left: 4px; font-size: 15px; }
.panel h2::after { content: ""; flex: 1; height: 2px; background: #d3d8e4; }
.ptabs { display: flex; height: 28px; padding-right: 1px; }
.ptabs button { width: 27px; margin-right: 1px; border: 1px solid transparent; border-bottom: 0; flex: none; }
.ptabs button:nth-child(even) { margin-right: 2px; }
.ptabs .on { border-color: #c6cbe0; background: #e8eaee; }
.ptabs svg { width: 22px; height: 22px; display: block; margin: 2px auto 0; }
.ptabs .opts { opacity: .5; margin: 0 0 0 auto; }
.pbody { border: 1px solid #c6cbe0; margin-right: 2px; padding: 6px 9px 0 8px; flex: 1; margin-bottom: 10px; }
.ptypes { display: flex; gap: 5px; height: 47px; }
.ptypes button { width: 37px; height: 37px; }
.ptypes .on { background: #9dabec; }
.ptypes svg { width: 30px; height: 30px; display: block; margin: auto; }
.pbody h3 { font-size: 17px; line-height: 28px; height: 33px; padding-top: 4px; border-bottom: 1px solid #d9dbe3; }
.row { display: flex; height: 25px; margin-left: 25px; border-bottom: 1px solid #dcdee4; }
.row label { width: 164px; flex: none; line-height: 26px; border-right: 1px solid #dadce4; }
.row > input, .row > select { flex: 1; min-width: 0; border: 0; border-radius: 0; padding: 1px 3px 0; background: #fff; outline: 0; }
.row > .ro { background: transparent; }
.row select { appearance: none; background: #fff url("data:image/svg+xml,%3Csvg xmlns='http://www.w3.org/2000/svg' width='22' height='24'%3E%3Cpath d='M0 0v24' stroke='%23c8c8cc'/%3E%3Cpath d='M7 10l4 4 4-4' fill='none' stroke='%23555'/%3E%3C/svg%3E") right center no-repeat; }
.cell { flex: 1; display: flex; align-items: center; }
.place { flex: 1; height: 24px; margin: 0 1px 0 1px; background: #fdfdfd; border: 1px solid #c9cbd0; border-radius: 2px; line-height: 20px; color: #111; }
.dots { width: 23px; height: 24px; background: #fdfdfd; border: 1px solid #c9cbd0; border-radius: 2px; line-height: 18px; }
input[type=checkbox] { appearance: none; width: 17px; height: 17px; flex: none; border: 1px solid #77797d; border-radius: 4px; background: #f3f3f5; }
input[type=checkbox]:checked { border-color: #0b4fae; background: #0b4fae url("data:image/svg+xml,%3Csvg xmlns='http://www.w3.org/2000/svg' viewBox='0 0 16 16'%3E%3Cpath d='M4 8l3 3 5-6' fill='none' stroke='%23cfe0ff'/%3E%3C/svg%3E") center / 15px no-repeat; }
.cell input { margin-left: 3px; }

.osnap { display: flex; height: 24px; align-items: center; gap: 9px; padding-left: 7px; margin-left: 4px; border-left: 1px solid #cfd4e4; }
.osnap label { display: flex; align-items: center; gap: 5px; }
.osnap .pale input { border-color: #ddd; background: #fff; width: 16px; }
.osnap .pale + .pale { margin-left: 12px; }
.status { display: flex; height: 22px; border-top: 1px solid #cdd0e0; border-bottom: 1px solid #222; line-height: 21px; }
.status > * { border-right: 1px solid #cdd0e0; line-height: 21px; flex: none; overflow: hidden; }
.status .cp { width: 62px; padding-left: 6px; }
.status .num { width: 112px; text-align: center; }
.status .layer { width: 218px; display: flex; padding-left: 3px; gap: 3px; align-items: center; }
.layer i { width: 14px; height: 14px; background: #000; }
.status button { padding: 0 5px 0 6px; border-right: 1px solid #d6d8e2; }
.status .on { background: #c6cceb; font-weight: 700; }
.status .cpu { border: 0; }
```

FILE: grid.js
```js
// Draws the construction-plane grid of each viewport: a line per unit, a heavier one per ten.
const MINOR = 'rgba(70,80,92,.14)';
const HALF = 'rgba(70,80,92,.2)';
const MAJOR = 'rgba(50,58,70,.32)';
const X_AXIS = '#8c3a44';
const Y_AXIS = '#3a8a40';

function line(c, a, b, color, width) {
  c.strokeStyle = color;
  c.lineWidth = width || 1;
  c.beginPath();
  c.moveTo(a[0], a[1]);
  c.lineTo(b[0], b[1]);
  c.stroke();
}

function drawPlan(c, w, h) {
  const unit = h / 55;
  const ox = Math.round(w / 2), oy = Math.round(h / 2);
  for (let i = -60; i <= 60; i++) {
    const color = i % 10 ? (i % 5 ? MINOR : HALF) : MAJOR;
    const x = Math.round(ox + i * unit) + 0.5;
    const y = Math.round(oy + i * unit) + 0.5;
    line(c, [x, 0], [x, h], color);
    line(c, [0, y], [w, y], color);
  }
  line(c, [ox + 0.5, oy], [ox + 0.5, 0], Y_AXIS);
  line(c, [ox, oy + 0.5], [w, oy + 0.5], X_AXIS);
}

// 50 mm lens, 146.058 units from the origin, looking down at 30 degrees.
function drawPerspective(c, w, h) {
  const f = (h / 2) / 0.24;
  const depth = (x, y) => 146.058 - 0.433 * x + 0.75 * y;
  const at = (x, y) => {
    const d = depth(x, y);
    return [w / 2 + f * (0.866 * x + 0.5 * y) / d, h / 2 - f * (-0.25 * x + 0.433 * y) / d];
  };
  const span = (x1, y1, x2, y2, color) => {
    const d1 = depth(x1, y1), d2 = depth(x2, y2);
    if (d1 < 5 && d2 < 5) return;
    if (d1 < 5) { const t = (5 - d1) / (d2 - d1); x1 += t * (x2 - x1); y1 += t * (y2 - y1); }
    if (d2 < 5) { const t = (5 - d2) / (d1 - d2); x2 += t * (x1 - x2); y2 += t * (y1 - y2); }
    line(c, at(x1, y1), at(x2, y2), color);
  };
  const R = 400;
  for (let i = -R; i <= R; i++) {
    const color = i % 10 ? 'rgba(70,80,92,.06)' : 'rgba(50,58,70,.24)';
    if (i % 10 && Math.abs(i) > 150) continue;
    const r = i % 10 ? 150 : R;
    span(i, -r, i, r, color);
    span(-r, i, r, i, color);
  }
  line(c, at(0, 0), at(0, R), Y_AXIS, 1.5);
  line(c, at(0, 0), at(120, 0), X_AXIS, 1.5);
}

function drawAll() {
  document.querySelectorAll('.vp').forEach(vp => {
    const canvas = vp.querySelector('canvas');
    const w = canvas.width = vp.clientWidth;
    const h = canvas.height = vp.clientHeight;
    const c = canvas.getContext('2d');
    (vp.dataset.view === 'persp' ? drawPerspective : drawPlan)(c, w, h);
  });
}
drawAll();
window.addEventListener('resize', drawAll);
```
